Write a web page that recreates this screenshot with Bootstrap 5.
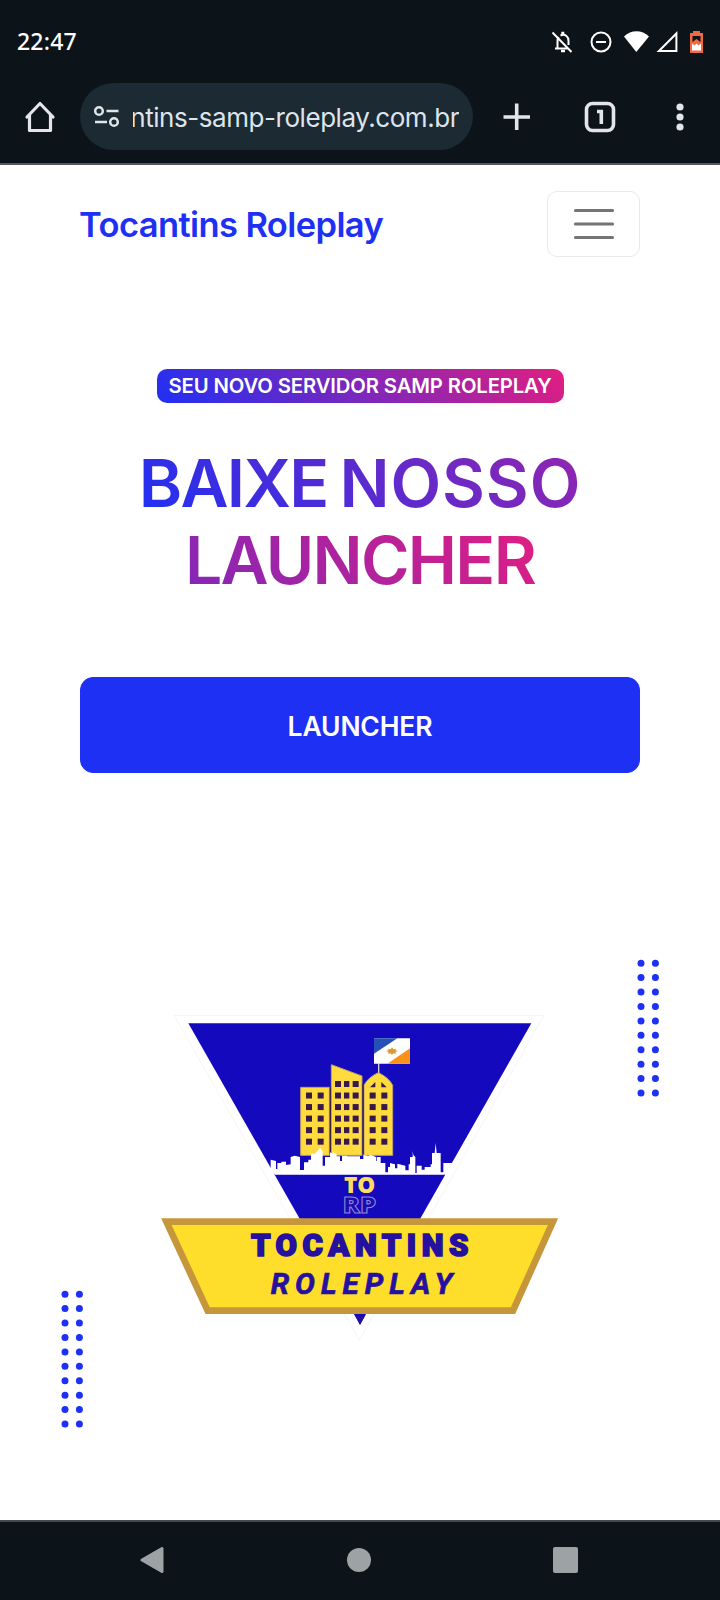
<!DOCTYPE html>
<html lang="pt-BR">
<head>
<meta charset="utf-8">
<meta name="viewport" content="width=device-width, initial-scale=1">
<title>Tocantins Roleplay</title>
<link href="https://cdn.jsdelivr.net/npm/bootstrap@5.3.0/dist/css/bootstrap.min.css" rel="stylesheet">
<style>
  body { font-family: Inter, "Open Sans", sans-serif; background: #fff; height: 1600px; overflow: hidden; }
  svg { display: block; flex: none; }
  .phone-top { background: #0c1319; height: 165px; border-bottom: 2px solid #55585b; }
  .status-row { height: 83px; padding: 0 15px 0 17px; }
  .clock { font: 500 23px/1 "Noto Sans", sans-serif; letter-spacing: .2px; color: #fff; }
  .url-pill { width: 393px; height: 67px; background: #1b2a33; border-radius: 34px; padding: 3px 14px 0 14px; }
  .url-pill svg { margin-top: -3px; }
  .url-text { width: 326px; height: 40px; margin-left: 13px; font-size: 26px; line-height: 40px; letter-spacing: -.45px; color: #dfe3ea; white-space: nowrap; }
  .site-nav { height: 118px; padding: 0 80px; }
  .site-brand { font-weight: 600; font-size: 34.5px; letter-spacing: -.6px; line-height: 1; color: #1e30f3; padding-top: 2px; margin-left: -1px; }
  .menu-btn { width: 93px; height: 66px; border: 1.5px solid #e9e9e9; border-radius: 10px; padding: 0; }
  .hero { padding: 86px 80px 0; height: 1237px; }
  .tag-pill { background: linear-gradient(45deg, #1e30f3 0%, #e21e80 100%); width: 407px; height: 34px; border-radius: 10px; font-size: 20.3px; font-weight: 600; letter-spacing: -.13px; padding-top: 1px; }
  .headline { font-size: 66px; line-height: 77px; font-weight: 600; margin-top: 42px; }
  .headline > span { background: linear-gradient(45deg, #1e30f3 0%, #e21e80 100%); -webkit-background-clip: text; background-clip: text; color: transparent; letter-spacing: -1.7px; word-spacing: -3px; }
  .headline .wide-word { letter-spacing: .9px; }
  .launch-btn { --bs-btn-bg: #1e30f3; --bs-btn-border-color: #1e30f3; --bs-btn-color: #fff; height: 96px; border-radius: 13px; font-size: 26.5px; font-weight: 600; letter-spacing: -.15px; margin-top: 78px; padding: 10px 12px 6px; }
  .crest { margin-top: 227px; }
  .dots-right { right: 61px; top: 676px; }
  .dots-left { left: 61px; top: 1007px; }
  .phone-bottom { background: #0c1319; border-top: 2px solid #43494d; height: 80px; padding: 0 142px 2px 140px; }
</style>
</head>
<body class="d-flex flex-column">
<header class="phone-top flex-shrink-0">
  <div class="status-row d-flex align-items-center justify-content-between">
    <span class="clock">22:47</span>
    <svg width="156" height="26" viewBox="549 29 156 26" fill="none" stroke="#fff" stroke-width="2">
      <path d="M552.5 32.5 571.5 52M555 48.5h13.5M557.5 48v-7c0-1.700.4-3 1.200-4M560.500 35.500c4.500-2 8 1 8 5.500v4" />
      <path d="M561.300 33h3M561 51h4" stroke-width="2.500"/>
      <circle cx="601" cy="42" r="9.500"/><path d="M596 42h10"/>
      <path d="M624 36.500c7-7 18-7 25 0L636.300 52z" fill="#fff" stroke="none"/>
      <path d="M676.400 33.500v17.500h-17.500z"/>
      <path d="M693 31h7v2h3v20h-13V33h3z" fill="#ee6a43" stroke="none"/>
      <path d="M692.500 36h8v6l-4-3-4 3z" fill="#0c1319" stroke="none"/><path d="M692 43.500l2.500 2 2-2 2 2 2.500-2v7h-9z" fill="#fff" stroke="none"/>
    </svg>
  </div>
  <div class="d-flex align-items-center">
    <svg width="80" height="67" viewBox="0 83 80 67" fill="none" stroke="#e3e5ea" stroke-width="3.200" stroke-linejoin="round" stroke-linecap="round"><path d="M27 117 40 103.500 53 117M29.500 115v15.500h21V115"/></svg>
    <div class="url-pill d-flex align-items-center">
      <svg width="26" height="24" viewBox="94 105 26 24" fill="none" stroke="#e0e5ea" stroke-width="2.500"><circle cx="99" cy="111" r="3.800"/><path d="M106.500 111H118.500M95 122h12"/><circle cx="114" cy="122" r="3.800"/></svg>
      <div class="url-text d-flex justify-content-end overflow-hidden"><span>tocantins-samp-roleplay.com.br</span></div>
    </div>
    <svg width="247" height="67" viewBox="473 83 247 67" fill="none" stroke="#e3e5ea" stroke-width="3.600"><path d="M503.500 117h26.500M516.700 103.500v26.500"/><rect x="586.500" y="103.500" width="27" height="27" rx="6"/><path d="M597 111.500h4.300v12.500"/><g fill="#e3e5ea" stroke="none"><circle cx="680" cy="107" r="3.600"/><circle cx="680" cy="117" r="3.600"/><circle cx="680" cy="127" r="3.600"/></g></svg>
  </div>
</header>

<nav class="site-nav d-flex align-items-center justify-content-between flex-shrink-0">
  <a class="site-brand text-decoration-none" href="#">Tocantins Roleplay</a>
  <button class="menu-btn btn d-flex align-items-center justify-content-center" type="button" aria-label="Menu">
    <svg width="42" height="34" viewBox="0 0 42 34" stroke="#747474" stroke-width="3.200" stroke-linecap="round"><path d="M2.500 3.500h37M2.500 17h37M2.500 30.500h37"/></svg>
  </button>
</nav>

<main class="hero position-relative flex-shrink-0">
  <div class="tag-pill text-white mx-auto d-flex align-items-center justify-content-center text-nowrap"><span>SEU NOVO SERVIDOR SAMP ROLEPLAY</span></div>
  <h1 class="headline text-center mb-0"><span>BAIXE <span class="wide-word">NOSSO</span><br>LAUNCHER</span></h1>
  <a class="launch-btn btn w-100 d-flex align-items-center justify-content-center" href="#">LAUNCHER</a>

  <svg class="crest mx-auto" width="420" height="350" viewBox="0 0 1260 1050">
    <path d="M72 46H1182L628 1020Z" fill="#fff" stroke="#f5f5f6" stroke-width="3"/>
    <path d="M115 70H1144L630 974Z" fill="#1409bd"/>
    <!-- flag -->
    <path d="M686 190v32" stroke="#d5d2d5" stroke-width="4"/>
    <path d="M672 115h108v76H672z" fill="#fff"/><path d="M672 115h70l-70 46z" fill="#2450b8"/><path d="M780 145v46h-68z" fill="#fa9219"/>
    <path d="M726 142l4 6 8-2-2 5 8 2-8 3 2 6-8-2-4 5-4-5-8 2 2-6-8-3 8-2-2-5 8 2z" fill="#d99a31"/>
    <!-- towers -->
    <g fill="#ffdb3d" stroke="#bba06b" stroke-width="3"><path d="M452 262h86v204h-86zM544 194l92 34v238h-92zM642 466V256q12-24 43-38 31 14 43 38v210z"/></g>
    <path d="M541 262v200M639 250v212" stroke="#39204c" stroke-width="4"/>
    <g fill="#38194a" id="windows"></g>
    <path d="M660 262l16-16v16zM694 246l16 16h-16z" fill="#38194a"/>
    <!-- skyline -->
    <path transform="translate(330 405)" fill="#fff" d="M0 76L32 100V74L48 78V102H52V84H64V80H78V90L92 88V66L104 62L120 66V105H132V82H145V74H153V56H165L180 38L188 48V92H195V66H210V52L218 56V50L230 58V64H240V78H246V62H262V64H300V72H310V60L328 64V58L348 66V78H350V66H362V84H376V112H384V96H390V84L405 88V100H412V86L436 92V106H446V88H450V66H458V48L460 60L466 66V114H470V92H485V104H494V96H512V88H516V54H524L527 24L530 54H542V112H550V84H590L560 119H45Z"/>
    <g font-family="'Open Sans', sans-serif" font-weight="800" font-size="67"><text x="582" y="578" textLength="94" lengthAdjust="spacingAndGlyphs" fill="#ffdc61">TO</text><text x="578" y="638" font-size="69" textLength="100" lengthAdjust="spacingAndGlyphs" fill="#1b0cae" stroke="#9187da" stroke-width="3">RP</text></g>
    <!-- banner -->
    <path d="M44 660H1216L1092 938H168Z" fill="#ffdd2b"/>
    <path d="M49 665H1209L1089 932H173Z" fill="none" stroke="#c6963a" stroke-width="20"/>
    <g font-family="Roboto, sans-serif" fill="#2510a0"><text x="303" y="768" font-size="93" font-weight="900" stroke="#2510a0" stroke-width="5" textLength="652">TOCANTINS</text><text x="362" y="883" font-size="89" font-weight="700" font-style="italic" stroke="#2510a0" stroke-width="2" textLength="545">ROLEPLAY</text></g>
    <path d="M615 946h31l-16 29z" fill="#22109d"/>
  </svg>

  <svg class="dots-right position-absolute" width="22" height="140" fill="#1e30f3"></svg>
  <svg class="dots-left position-absolute" width="22" height="140" fill="#1e30f3"></svg>
</main>

<footer class="phone-bottom d-flex align-items-center justify-content-between flex-shrink-0">
  <svg width="25" height="28" fill="#9da2a5" stroke="#9da2a5" stroke-width="3" stroke-linejoin="round"><path d="M2 14 22 2.500v23z"/></svg>
  <svg width="24" height="24" fill="#9da2a5"><circle cx="12" cy="12" r="12"/></svg>
  <svg width="25" height="26" fill="#9da2a5"><rect width="25" height="26" rx="2"/></svg>
</footer>

<script src="https://cdn.jsdelivr.net/npm/bootstrap@5.3.0/dist/js/bootstrap.bundle.min.js"></script>
<script>
  const NS = 'http://www.w3.org/2000/svg';
  function add(parent, tag, attrs) {
    const el = document.createElementNS(NS, tag);
    for (const k in attrs) el.setAttribute(k, attrs[k]);
    parent.appendChild(el);
  }
  // Two columns of ten dots for each decoration
  document.querySelectorAll('.dots-right, .dots-left').forEach(svg => {
    for (let r = 0; r < 10; r++) for (const x of [4, 18.4]) add(svg, 'circle', { cx: x, cy: 4.2 + r * 14.42, r: 3.5 });
  });
  // Tower windows: [x, width, first row]
  const panes = document.getElementById('windows');
  [[468,18,1],[503,18,1],[555,18,0],[582,16,0],[608,18,0],[659,18,1],[694,18,1]].forEach(([x, w, first]) => {
    for (let r = first; r < 6; r++) add(panes, 'rect', { x, y: 243 + r * 34.6, width: w, height: 18 });
  });
</script>
</body>
</html>
